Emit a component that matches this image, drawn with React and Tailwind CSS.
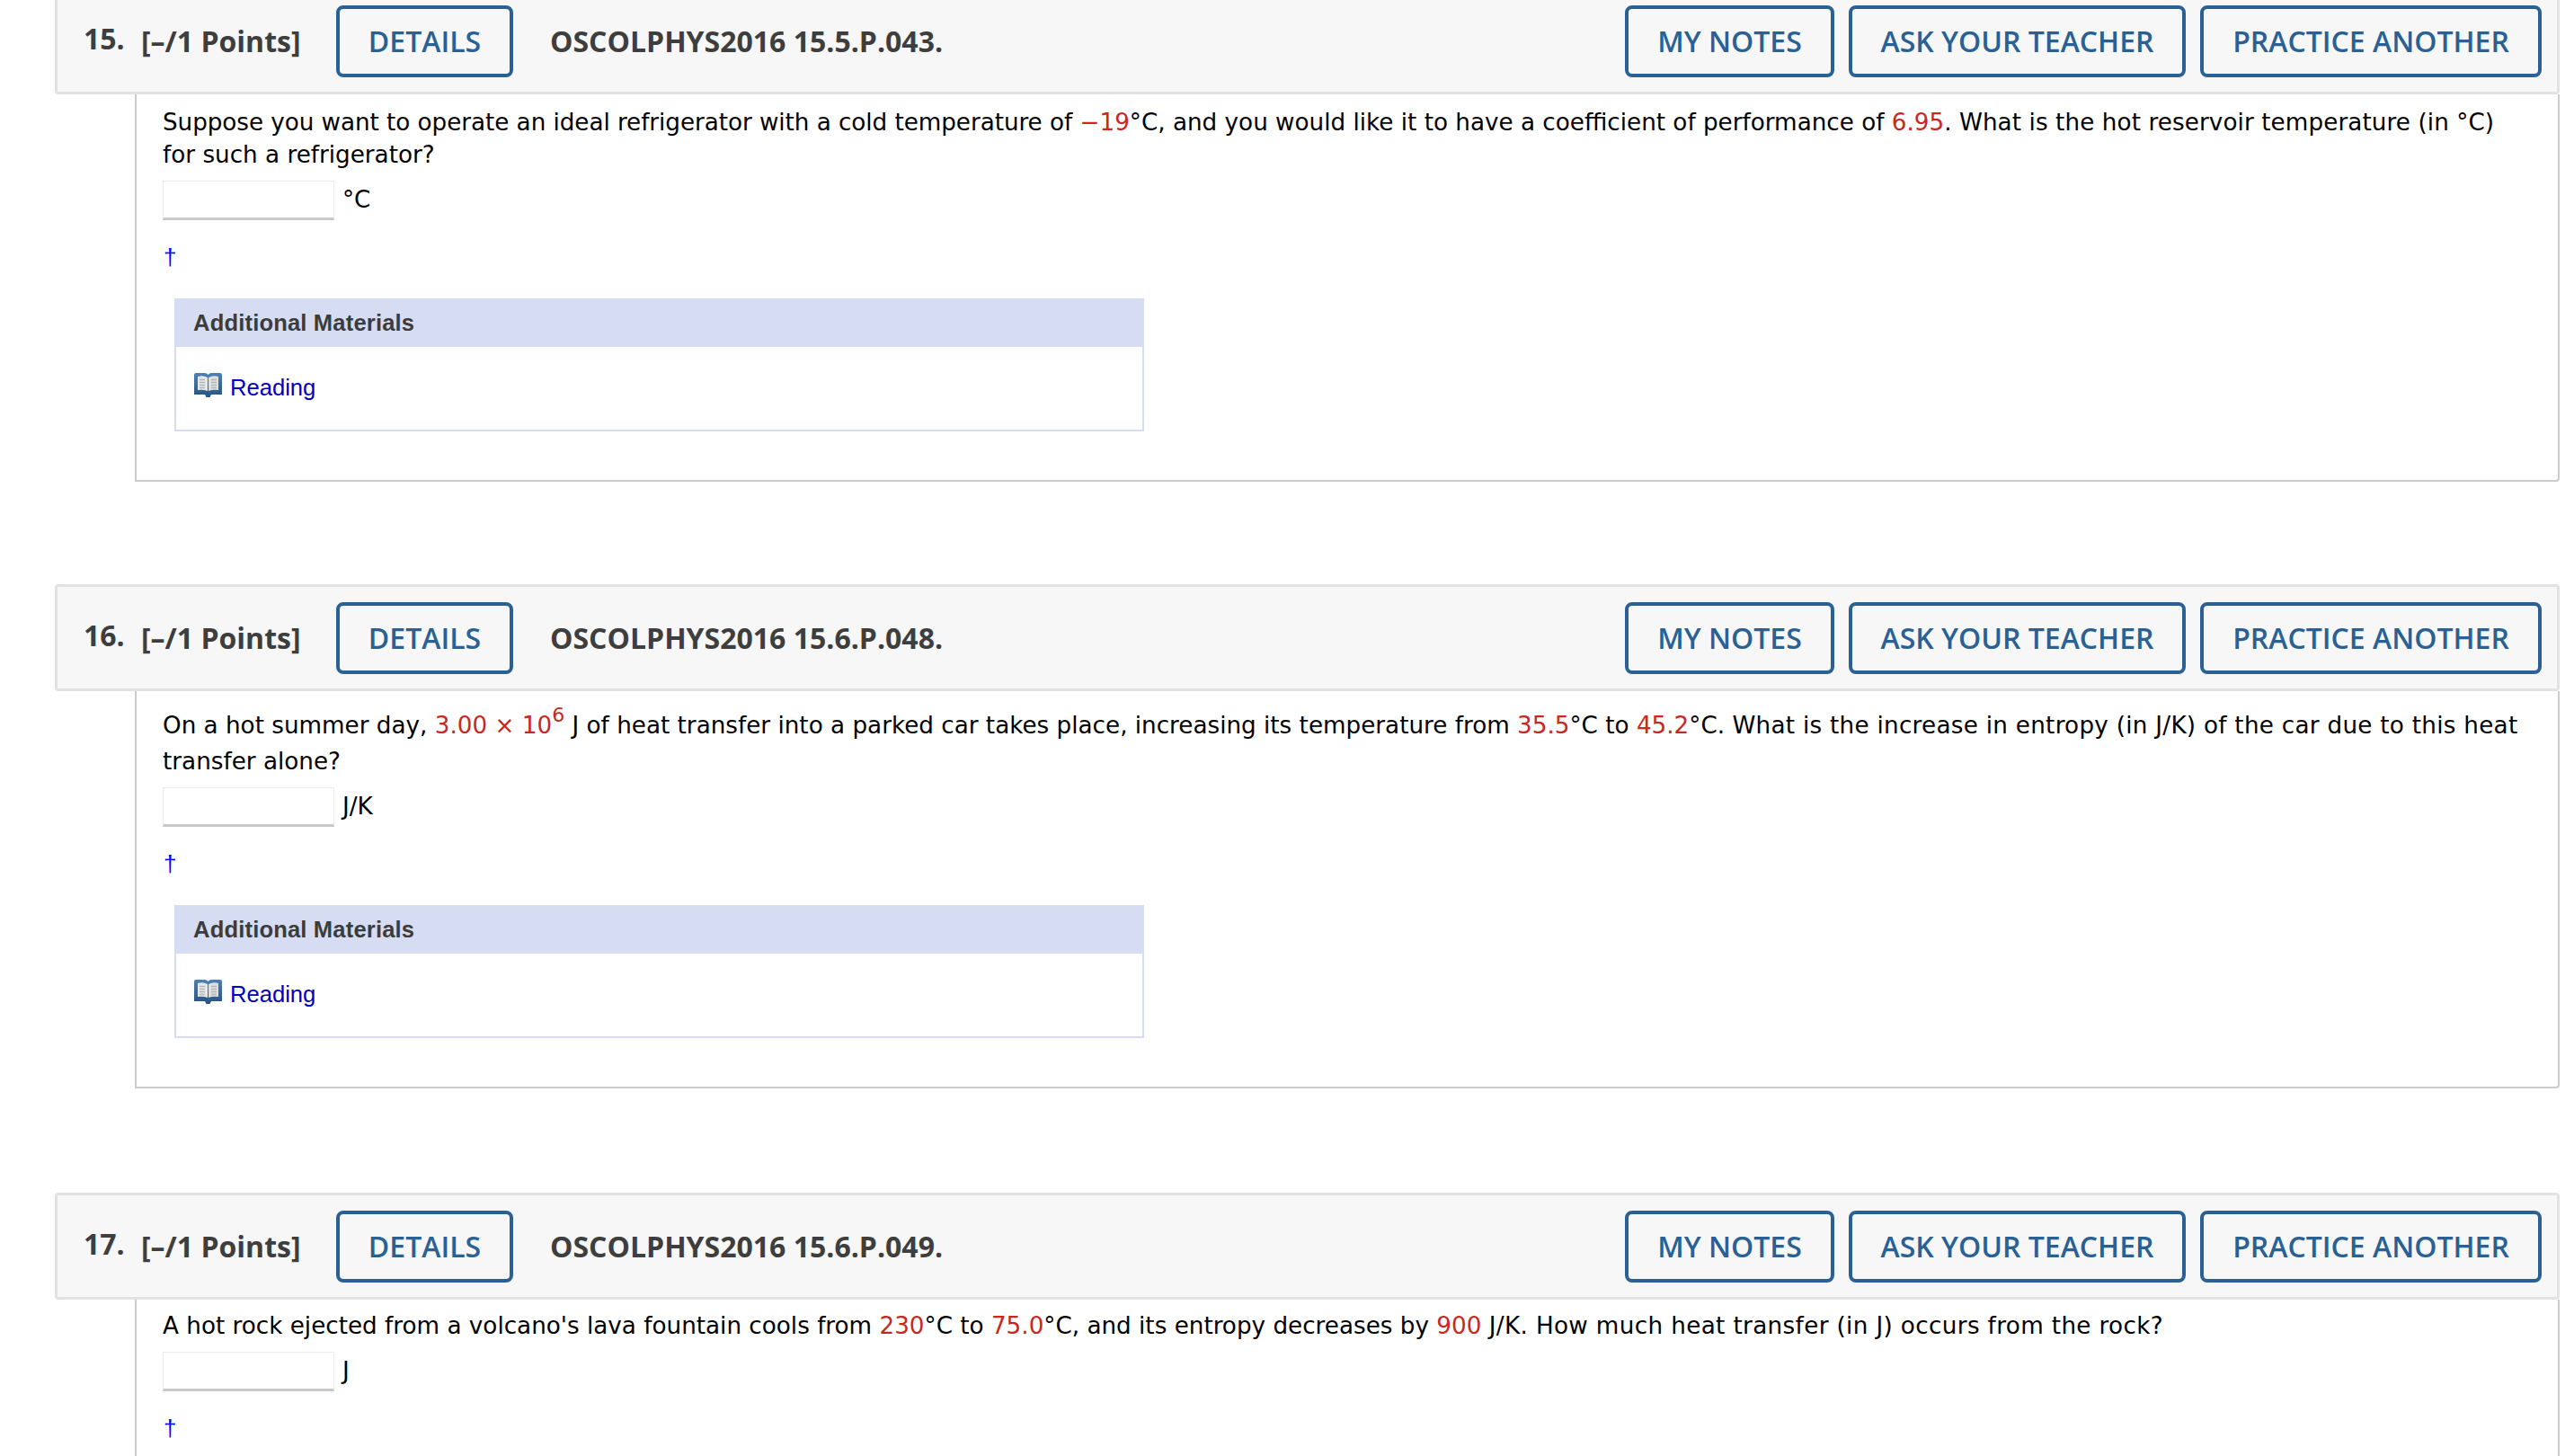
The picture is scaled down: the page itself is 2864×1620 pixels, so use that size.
const Red = ({ children }) => <span className="text-[#c8281e]">{children}</span>;

function BookIcon() {
  return (
    <svg width="33" height="28" viewBox="0 0 33 28" className="shrink-0">
      <defs>
        <linearGradient id="cover" x1="0" y1="0" x2="0" y2="1">
          <stop offset="0" stopColor="#4f80b4" />
          <stop offset="1" stopColor="#255383" />
        </linearGradient>
      </defs>
      <path d="M1 2 Q1 0 3 0 H13 Q15 0 16.5 2 Q18 0 20 0 H30 Q32 0 32 2 V24 H20 L18.5 27 H14.5 L13 24 H1 Z" fill="url(#cover)" />
      <path d="M5 4 Q11 2 16 5 V20 Q11 18 5 19 Z" fill="#e6e8e8" />
      <path d="M28 4 Q22 2 17 5 V20 Q22 18 28 19 Z" fill="#dcdfe0" />
      <path d="M7 7.5 H13 M7 10.5 H13 M7 13.5 H13 M7 16.5 H13 M20 7.5 H26 M20 10.5 H26 M20 13.5 H26 M20 16.5 H26" stroke="#b4b8bb" strokeWidth="1.5" />
    </svg>
  );
}

function NavButton({ width, children }) {
  return (
    <button className={`h-[80px] ${width} rounded-lg border-4 border-[#2a6195] text-[#2a6195] font-semibold whitespace-nowrap`}>
      {children}
    </button>
  );
}

function Question({ num, code, unit, children, sectionClass = '', bodyClass = 'pt-[13px]', textClass = 'leading-[36px]', inputGap = 'mt-[11px]', showMaterials = true }) {
  return (
    <section className={sectionClass}>
      <header className="h-[119px] flex items-center pl-[29px] pr-[17px] bg-[#f7f7f7] border-[3px] border-[#e2e2e2] rounded text-[32px] text-[#3e3e3e] font-['Open_Sans',sans-serif]">
        <span className="font-bold w-[64px] -mt-[6px]">{num}.</span>
        <span className="font-bold w-[217px]">[–/1 Points]</span>
        <NavButton width="w-[197px]">DETAILS</NavButton>
        <span className="font-bold ml-[41px]">{code}</span>
        <div className="ml-auto flex gap-4">
          <NavButton width="w-[233px]">MY NOTES</NavButton>
          <NavButton width="w-[375px]">ASK YOUR TEACHER</NavButton>
          <NavButton width="w-[380px]">PRACTICE ANOTHER</NavButton>
        </div>
      </header>
      <div className={`ml-[89px] pl-[29px] pr-[31px] pb-[54px] border-l-2 border-r-2 border-b-2 border-[#cccccc] rounded-br ${bodyClass}`}>
        <p className={`text-[26.22px] text-black font-['DejaVu_Sans',sans-serif] ${textClass}`}>{children}</p>
        <div className={`${inputGap} flex items-center`}>
          <div className="w-[191px] h-[44px] bg-white border border-[#ececec] border-b-[3px] border-b-[#c9c9c9]" />
          <span className="ml-[9px] text-[26.22px] text-black font-['DejaVu_Sans',sans-serif]">{unit}</span>
        </div>
        <div className="mt-[23px] pl-[1px] h-[37px] text-[26px] leading-[37px] text-[#0000ff] font-['Liberation_Sans',sans-serif]">†</div>
        {showMaterials && (
          <div className="mt-[27px] ml-[13px] w-[1079px] h-[148px] border-2 border-[#d6ddf3] font-['Liberation_Sans',sans-serif] text-[25.6px]">
            <div className="h-[54px] -mx-[2px] -mt-[2px] pl-[21px] flex items-center bg-[#d6ddf3] font-bold tracking-[0.15px] text-[#3c3c3c]">
              Additional Materials
            </div>
            <div className="mt-[29px] pl-[19px] flex items-start gap-[8px]">
              <BookIcon />
              <a className="leading-[32px] text-[#0000c0]">Reading</a>
            </div>
          </div>
        )}
      </div>
    </section>
  );
}

export default function App() {
  return (
    <div className="h-[1620px] overflow-hidden bg-white">
      <main className="-mt-[14px] ml-[61px] w-[2787px] flex flex-col gap-[114px]">
        <Question num="15" code="OSCOLPHYS2016 15.5.P.043." unit="°C">
          <span className="tracking-[-0.05px]">Suppose you want to operate an ideal refrigerator with a cold temperature of</span> <Red>−19</Red>°C, and you would like it to have a coefficient of performance of <Red>6.95</Red>. <span className="tracking-[0.09px]">What is the hot reservoir temperature (in °C)</span> for such a refrigerator?
        </Question>
        <Question num="16" code="OSCOLPHYS2016 15.6.P.048." unit="J/K" bodyClass="pt-[18px]" textClass="leading-[40px]" inputGap="mt-[9px]">
          On a hot summer day, <Red>3.00 × 10<sup className="text-[22px] -top-[13px]">6</sup></Red> J of heat transfer into a parked car takes place, increasing its temperature from <Red>35.5</Red>°C to <Red>45.2</Red>°C. <span className="tracking-[0.27px]">What is the increase in entropy (in J/K) of the car due to this heat</span> transfer alone?
        </Question>
        <Question num="17" code="OSCOLPHYS2016 15.6.P.049." unit="J" sectionClass="mt-[2px]" bodyClass="pt-[11px]" showMaterials={false}>
          A hot rock ejected from a volcano's lava fountain cools from <Red>230</Red>°C to <Red>75.0</Red>°C, and its entropy decreases by <Red>900</Red> <span className="tracking-[0.36px]">J/K. How much heat transfer (in J) occurs from the rock?</span>
        </Question>
      </main>
    </div>
  );
}
